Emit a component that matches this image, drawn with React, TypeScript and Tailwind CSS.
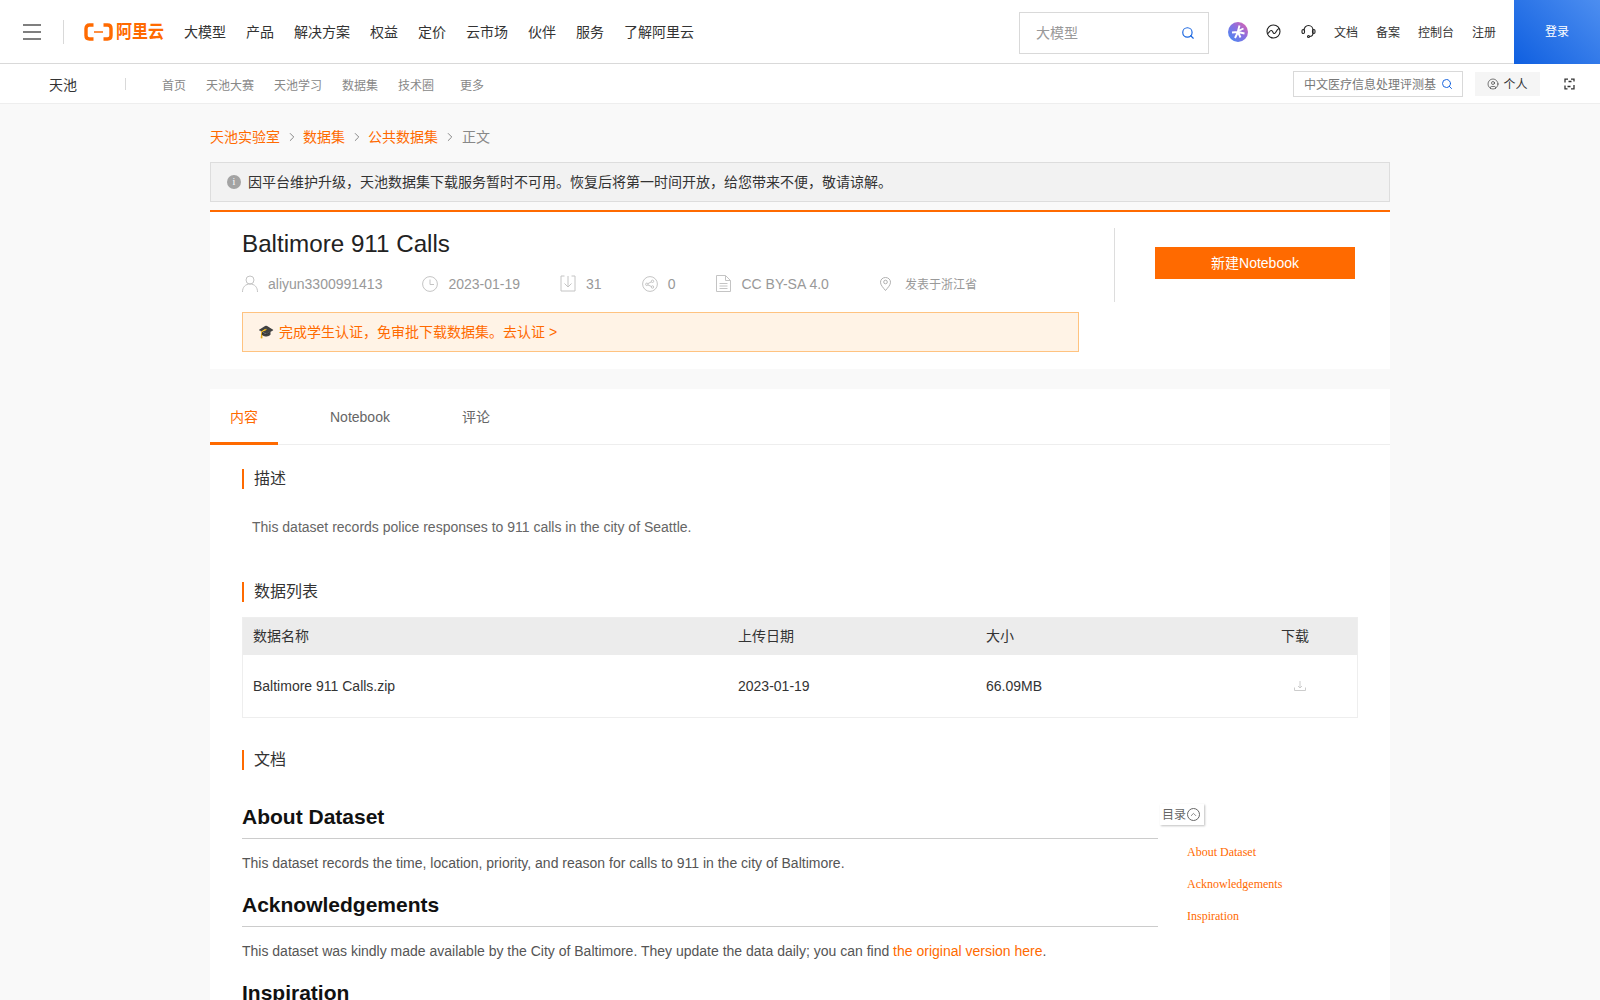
import React from "react";
import { Search, ChevronRight, CircleUser, ChevronUp } from "lucide-react";

const font = "font-['Liberation_Sans','Noto_Sans_CJK_SC',sans-serif]";

function Hamburger() {
  return (
    <svg className="ml-[23px]" width="18" height="16" viewBox="0 0 18 16" fill="none" stroke="#555" strokeWidth="1.600">
      <path d="M0 1H18M0 8H18M0 15H18" />
    </svg>
  );
}

function Logo() {
  return (
    <div className="flex items-center gap-[3px] text-[#ff6a00]">
      <svg width="29" height="18" viewBox="0 0 29 18" fill="none">
        <path d="M9.500 2H5.500Q2 2 2 5.500V12.500Q2 16 5.500 16H9.500M19.500 2H23.500Q27 2 27 5.500V12.500Q27 16 23.500 16H19.500" stroke="#ff6a00" strokeWidth="3.400" />
        <path d="M10 9H19" stroke="#ff6a00" strokeWidth="1.500" />
      </svg>
      <span className="scale-y-[1.15] text-[16px] leading-none font-bold">阿里云</span>
    </div>
  );
}

function StarBadge() {
  return (
    <svg width="20" height="20" viewBox="0 0 20 20">
      <defs>
        <linearGradient id="star" x1="0" y1="1" x2="1" y2="0">
          <stop offset="0" stopColor="#3f8cf5" />
          <stop offset="0.55" stopColor="#8a6fe0" />
          <stop offset="1" stopColor="#e860a8" />
        </linearGradient>
      </defs>
      <circle cx="10" cy="10" r="10" fill="url(#star)" />
      <path d="M11.500 3.500L10 9L15.500 6.500M4 10.500L10 10L16.500 11.500M10 10L7 16M10 10L12.500 15.500" stroke="#fff" strokeWidth="1.900" fill="none" />
    </svg>
  );
}

function Globe() {
  return (
    <svg className="ml-[18px]" width="15" height="15" viewBox="0 0 15 15" fill="none" stroke="#222" strokeWidth="1.100">
      <circle cx="7.500" cy="7.500" r="6.500" />
      <path d="M1.500 9.500C3 9.500 3.500 6 5.500 6.500C7.500 7 6.500 10 8.500 9.500C10.500 9 10 5.500 13 4.500" />
    </svg>
  );
}

function Headset() {
  return (
    <svg className="ml-[20px]" width="15" height="15" viewBox="0 0 15 15" fill="none" stroke="#222" strokeWidth="1.100">
      <path d="M3 6.500C3 3.500 5 1.500 7.500 1.500C10 1.500 12 3.500 12 6.500V9C12 11 10.500 12.500 8.500 12.500" />
      <rect x="1" y="5.500" width="2.500" height="4" rx="1.200" />
      <rect x="11.500" y="5.500" width="2.500" height="4" rx="1.200" />
      <circle cx="7.500" cy="12.500" r="1" />
    </svg>
  );
}

function Corners() {
  return (
    <svg className="ml-[24px] mr-[25px]" width="11" height="12" viewBox="0 0 11 12" fill="none" stroke="#333" strokeWidth="1.300">
      <path d="M4 1.200H1V4.500M7 1.200H10V3.500M1 7.500V10.800H3.500M10 7V10.800H7" />
      <path d="M4.500 3.500H7.500M3.500 8.500H6.500" />
    </svg>
  );
}

function Section({ title }: { title: string }) {
  return (
    <div className="border-l-2 border-[#ff6a00] pl-[10px] text-base leading-5 text-[#333]">{title}</div>
  );
}

const iconProps = { fill: "none", stroke: "#c4c4c4", strokeWidth: 1 };

function UserIcon() {
  return (
    <svg width="16" height="17" viewBox="0 0 16 17" {...iconProps}>
      <circle cx="8" cy="5" r="4" />
      <path d="M.5 17C.5 12 3.500 9 8 9C12.500 9 15.500 12 15.500 17" />
    </svg>
  );
}

function ClockIcon() {
  return (
    <svg width="16" height="16" viewBox="0 0 16 16" {...iconProps}>
      <circle cx="8" cy="8" r="7.400" />
      <path d="M8 3.500V8.500H12" />
    </svg>
  );
}

function DownloadIcon() {
  return (
    <svg width="16" height="17" viewBox="0 0 16 17" {...iconProps}>
      <path d="M4.500 1H1V16H15V1H11.500M8 1V12M4.500 8.500L8 12L11.500 8.500" />
    </svg>
  );
}

function ShareIcon() {
  return (
    <svg width="16" height="16" viewBox="0 0 16 16" {...iconProps}>
      <circle cx="8" cy="8" r="7.400" />
      <circle cx="4.800" cy="8.300" r="1.200" />
      <circle cx="10.500" cy="5.300" r="1.200" />
      <circle cx="10.500" cy="11" r="1.200" />
      <path d="M5.800 7.700L9.500 5.800M5.800 8.900L9.500 10.500" />
    </svg>
  );
}

function DocIcon() {
  return (
    <svg width="15" height="17" viewBox="0 0 15 17" {...iconProps}>
      <path d="M.5 .5H9.500L14.500 5.500V16.500H.5ZM9.500 .5V5.500H14.500M3.500 8.500H11.500M3.500 11H11.500M3.500 13.500H11.500" />
    </svg>
  );
}

function PinIcon() {
  return (
    <svg width="11" height="14" viewBox="0 0 11 14" fill="none" stroke="#b0b0b0" strokeWidth="1">
      <path d="M5.500 13.500C3 10.500 .5 8 .5 5.200C.5 2.500 2.700 .5 5.500 .5C8.300 .5 10.500 2.500 10.500 5.200C10.500 8 8 10.500 5.500 13.500Z" />
      <circle cx="5.500" cy="5" r="1.800" />
    </svg>
  );
}

function Meta({ icon, text }: { icon: React.ReactNode; text: string }) {
  return (
    <div className="flex items-center gap-[10px]">
      <span className="flex w-4 justify-center">{icon}</span>
      <span>{text}</span>
    </div>
  );
}

export default function App() {
  const nav = ["大模型", "产品", "解决方案", "权益", "定价", "云市场", "伙伴", "服务", "了解阿里云"];
  const sub: [string, string][] = [
    ["首页", "mr-5"],
    ["天池大赛", "mr-5"],
    ["天池学习", "mr-5"],
    ["数据集", "mr-5"],
    ["技术圈", "mr-[26px]"],
    ["更多", ""],
  ];
  return (
    <div className={`${font} h-[1000px] overflow-hidden bg-[#f9f9f9] text-[#333]`}>
      <header className="flex h-16 items-center border-b border-[#d9d9d9] bg-white">
        <Hamburger />
        <div className="ml-[22px] mr-[20px] h-6 w-px bg-[#d9d9d9]" />
        <Logo />
        <nav className="ml-5 flex gap-5 pt-px text-sm text-[#333]">
          {nav.map((n) => (
            <span key={n}>{n}</span>
          ))}
        </nav>
        <div className="ml-auto mt-[2px] flex h-[42px] w-[190px] items-center justify-between border border-[#d9d9d9] pl-4 pr-[13px] text-sm text-[#999]">
          <span>大模型</span>
          <Search size={14} className="text-[#1a66e0]" />
        </div>
        <div className="ml-[19px] flex h-5 w-5 items-center justify-center"><StarBadge /></div>
        <Globe />
        <Headset />
        <div className="ml-[18px] flex gap-[18px] pt-[3px] text-xs text-[#333]">
          <span>文档</span>
          <span>备案</span>
          <span>控制台</span>
          <span>注册</span>
        </div>
        <div className="ml-[18px] flex h-16 w-[86px] items-center justify-center bg-[linear-gradient(45deg,#0f5fe0,#4d8ef0)] pt-px text-xs text-white">登录</div>
      </header>

      <div className="flex h-10 items-center border-b border-[#eee] bg-white">
        <span className="ml-[49px] pt-[2px] text-sm text-[#333]">天池</span>
        <span className="ml-[48px] mr-9 h-3 w-px bg-[#d9d9d9]" />
        <div className="flex pt-1 text-xs text-[#888]">
          {sub.map(([s, c]) => (
            <span key={s} className={c}>{s}</span>
          ))}
        </div>
        <div className="ml-auto flex h-[26px] w-[170px] items-center justify-between border border-[#d9d9d9] pl-[10px] pr-[9px] text-xs text-[#777]">
          <span className="whitespace-nowrap pt-[3px]">中文医疗信息处理评测基</span>
          <Search size={12} className="shrink-0 text-[#1a66e0]" />
        </div>
        <div className="ml-3 flex h-6 w-[65px] items-center justify-center gap-1 bg-[#f5f5f5] text-xs text-[#333]">
          <CircleUser size={12} strokeWidth={1.300} />
          <span className="pt-[3px]">个人</span>
        </div>
        <Corners />
      </div>

      <main className="mx-auto w-[1180px]">
        <div className="flex h-[58px] items-center pt-[8px] text-sm">
          <span className="text-[#ff6a00]">天池实验室</span>
          <ChevronRight size={14} strokeWidth={1.500} className="mx-[4.5px] text-[#777]" />
          <span className="text-[#ff6a00]">数据集</span>
          <ChevronRight size={14} strokeWidth={1.500} className="mx-[4.5px] text-[#777]" />
          <span className="text-[#ff6a00]">公共数据集</span>
          <ChevronRight size={14} strokeWidth={1.500} className="mx-[5px] text-[#777]" />
          <span className="text-[#888]">正文</span>
        </div>
        <div className="flex h-10 items-center gap-[7px] border border-[#ddd] bg-[#f2f2f2] pl-4 text-sm text-[#333]">
          <span className="flex h-[14px] w-[14px] items-center justify-center rounded-full bg-[#a3a3a3] font-['Liberation_Serif',serif] text-[10px] text-white">i</span>
          <span>因平台维护升级，天池数据集下载服务暂时不可用。恢复后将第一时间开放，给您带来不便，敬请谅解。</span>
        </div>

        <section className="mt-2 flex h-[159px] border-t-2 border-[#ff6a00] bg-white">
          <div className="ml-8 w-[837px]">
            <h1 className="mt-[16px] text-[24.2px] leading-8 text-[#222]">Baltimore 911 Calls</h1>
            <div className="mt-[11px] flex h-6 items-center gap-10 pt-px text-sm text-[#999]">
              <Meta icon={<UserIcon />} text="aliyun3300991413" />
              <Meta icon={<ClockIcon />} text="2023-01-19" />
              <Meta icon={<DownloadIcon />} text="31" />
              <Meta icon={<ShareIcon />} text="0" />
              <Meta icon={<DocIcon />} text="CC BY-SA 4.0" />
              <div className="ml-[11px] flex items-center gap-[14px]">
                <PinIcon />
                <span className="pt-[2px] text-xs text-[#999]">发表于浙江省</span>
              </div>
            </div>
            <div className="mt-[17px] flex h-10 items-center border border-[#ffc380] bg-[#fff3e6] pl-[15px] text-sm text-[#ff6a00]">
              <span className="mr-[5px] text-[13px]">🎓</span>
              <span>完成学生认证，免审批下载数据集。去认证 &gt;</span>
            </div>
          </div>
          <div className="ml-[35px] mt-[16px] flex h-[74px] w-[276px] items-start border-l border-[#ddd] pl-10 pt-[19px]">
            <button className="h-8 w-[200px] bg-[#ff6a00] text-sm text-white">新建Notebook</button>
          </div>
        </section>

        <section className="mt-5 bg-white pb-10">
          <div className="flex h-14 border-b border-[#eee] text-sm text-[#666]">
            <div className="mr-8 flex h-14 items-center border-b-[3px] border-[#ff6a00] px-5 pt-[3px] text-[#ff6a00]">内容</div>
            <div className="mr-8 flex h-14 items-center px-5">Notebook</div>
            <div className="flex h-14 items-center px-5">评论</div>
          </div>

          <div className="px-8 pt-6">
            <Section title="描述" />
            <p className="mt-[28px] pl-[10px] text-sm leading-5 text-[#666]">This dataset records police responses to 911 calls in the city of Seattle.</p>

            <div className="mt-[45px]"><Section title="数据列表" /></div>
            <div className="mt-[15px] border border-[#eee] text-sm text-[#333]">
              <div className="flex h-[37px] items-center bg-[#ececec] pb-[2px] pl-[10px]">
                <span className="w-[485px]">数据名称</span>
                <span className="w-[248px]">上传日期</span>
                <span className="w-[295px]">大小</span>
                <span>下载</span>
              </div>
              <div className="flex h-[62px] items-center pb-px pl-[10px]">
                <span className="w-[485px]">Baltimore 911 Calls.zip</span>
                <span className="w-[248px]">2023-01-19</span>
                <span className="w-[295px]">66.09MB</span>
                <svg className="ml-[13px] text-[#ccc]" width="12" height="12" viewBox="0 0 12 12" fill="none" stroke="currentColor" strokeWidth="1">
                  <path d="M.5 7.500V10.500H11.500V7.500M6 1V8M4 6L6 8L8 6" />
                </svg>
              </div>
            </div>

            <div className="mt-8"><Section title="文档" /></div>

            <div className="mt-[31px] flex">
              <div className="w-[916px] text-[#111]">
                <h2 className="border-b border-[#ccc] pb-[5px] text-[21px] leading-[32px] font-bold">About Dataset</h2>
                <p className="mt-[14px] text-sm leading-5 text-[#555]">This dataset records the time, location, priority, and reason for calls to 911 in the city of Baltimore.</p>
                <h2 className="mt-[16px] border-b border-[#ccc] pb-[5px] text-[21px] leading-[32px] font-bold">Acknowledgements</h2>
                <p className="mt-[14px] text-sm leading-5 text-[#555]">This dataset was kindly made available by the City of Baltimore. They update the data daily; you can find <span className="text-[#ff6a00]">the original version here</span>.</p>
                <h2 className="mt-[16px] text-[21px] leading-[32px] font-bold">Inspiration</h2>
              </div>
              <aside className="ml-[2px]">
                <div className="mt-[3px] flex h-[21px] w-[44px] items-center gap-[1px] pl-[2px] text-xs text-[#666] shadow-[1px_1px_2px_rgba(0,0,0,0.25)]">
                  <span>目录</span>
                  <span className="flex h-[13px] w-[13px] items-center justify-center rounded-full border border-[#666]"><ChevronUp size={9} /></span>
                </div>
                <ul className="mt-[11px] pl-[27px] font-['Liberation_Serif',serif] text-xs text-[#ff6a00]">
                  <li className="h-8 leading-8">About Dataset</li>
                  <li className="h-8 leading-8">Acknowledgements</li>
                  <li className="h-8 leading-8">Inspiration</li>
                </ul>
              </aside>
            </div>
          </div>
        </section>
      </main>
    </div>
  );
}
